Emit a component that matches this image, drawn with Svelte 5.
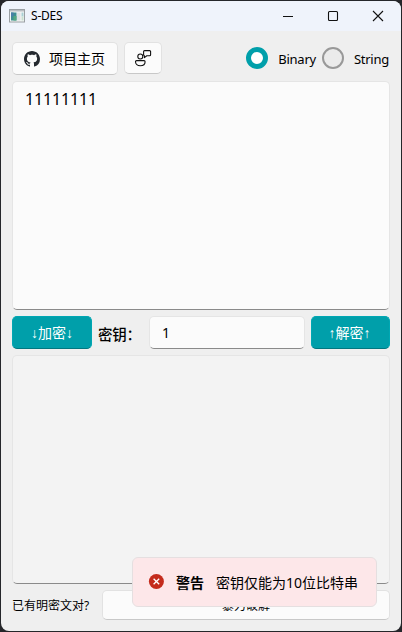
<script>
  let mode = $state('Binary');
  let plain = $state('11111111');
  let cipher = $state('');
  let key = $state('1');
</script>

<div class="desktop">
  <div class="window">
    <header>
      <svg class="app-icon" width="16" height="14" viewBox="0 0 16 14">
        <rect x=".5" y=".5" width="15" height="12.5" fill="#f5f7f7" stroke="#9a9fa3" />
        <rect x="1" y="1" width="14" height="1.5" fill="#b9bdc1" />
        <rect x="2" y="3.5" width="5.5" height="8" fill="#3f8f92" />
        <rect x="2" y="3.5" width="2.5" height="4" fill="#4a7fa8" />
        <rect x="4.5" y="7" width="3" height="4.5" fill="#55a780" />
        <rect x="8" y="3.5" width="3.5" height="8" fill="#dfe2e3" />
        <rect x="12.5" y="3.5" width="2" height="4" fill="#a9cfd4" />
        <rect x="12.5" y="7.5" width="2" height="4" fill="#c9dfcf" />
      </svg>
      <span class="title">S-DES</span>
      <div class="controls">
        <svg width="12" height="12" viewBox="0 0 12 12"><path d="M1 6.5H11" /></svg>
        <svg width="12" height="12" viewBox="0 0 12 12"><rect x="1.5" y="1.5" width="9" height="9" rx="1" /></svg>
        <svg width="12" height="12" viewBox="0 0 12 12"><path d="M1 1L11 11M11 1L1 11" /></svg>
      </div>
    </header>

    <main>
      <div class="row top">
        <button class="home">
          <svg width="16" height="16" viewBox="0 0 16 16" fill="#24292f">
            <path d="M8 0C3.58 0 0 3.58 0 8c0 3.54 2.29 6.53 5.47 7.59.4.07.55-.17.55-.38 0-.19-.01-.82-.01-1.49-2.01.37-2.53-.49-2.69-.94-.09-.23-.48-.94-.82-1.13-.28-.15-.68-.52-.01-.53.63-.01 1.08.58 1.23.82.72 1.21 1.87.87 2.33.66.07-.52.28-.87.51-1.07-1.78-.2-3.64-.89-3.64-3.95 0-.87.31-1.59.82-2.15-.08-.2-.36-1.02.08-2.12 0 0 .67-.21 2.2.82.64-.18 1.32-.27 2-.27s1.36.09 2 .27c1.53-1.04 2.2-.82 2.2-.82.44 1.1.16 1.92.08 2.12.51.56.82 1.27.82 2.15 0 3.07-1.87 3.75-3.65 3.95.29.25.54.73.54 1.48 0 1.07-.01 1.93-.01 2.2 0 .21.15.46.55.38A8.01 8.01 0 0 0 16 8c0-4.42-3.58-8-8-8z" />
          </svg>
          <span>项目主页</span>
        </button>
        <button class="feedback" aria-label="feedback">
          <svg width="18" height="18" viewBox="0 0 18 18" fill="none" stroke="#111" stroke-width="1.1" stroke-linejoin="round">
            <circle cx="6.3" cy="7.5" r="2.5" />
            <path d="M2.6 11.6H10a1.1 1.1 0 0 1 1.1 1.1c0 2.4-1.9 4-4.8 4s-4.8-1.6-4.8-4a1.1 1.1 0 0 1 1.1-1.1z" />
            <path d="M10.6 1.6H15.6a1 1 0 0 1 1 1V5.8a1 1 0 0 1-1 1H12.8L10.4 8.6V6.8a1 1 0 0 1-.8-1V2.6a1 1 0 0 1 1-1z" />
          </svg>
        </button>
        <div class="modes">
          {#each ['Binary', 'String'] as m}
            <label>
              <input type="radio" name="mode" value={m} bind:group={mode} />
              <span>{m}</span>
            </label>
          {/each}
        </div>
      </div>

      <textarea class="plain" bind:value={plain} spellcheck="false"></textarea>

      <div class="row mid">
        <button class="primary enc">↓加密↓</button>
        <span class="key-label">密钥：</span>
        <input class="key" bind:value={key} />
        <button class="primary dec">↑解密↑</button>
      </div>

      <textarea class="cipher" readonly bind:value={cipher}></textarea>

      <div class="row bottom">
        <span class="hint">已有明密文对?</span>
        <button class="crack">暴力破解</button>
      </div>
    </main>

    <div class="toast" role="alert">
      <svg width="16" height="16" viewBox="0 0 16 16">
        <circle cx="8.4" cy="7.5" r="7.5" fill="#c42b1c" />
        <path d="M5.6 4.7L11.2 10.3M11.2 4.7L5.6 10.3" stroke="#fff" stroke-width="1.3" />
      </svg>
      <strong>警告</strong>
      <span>密钥仅能为10位比特串</span>
    </div>
  </div>
</div>

<style>
  :global(body) {
    background: #25262a;
  }
  .desktop,
  .desktop * {
    box-sizing: border-box;
  }
  .desktop {
    width: 402px;
    height: 632px;
    background: #25262a;
    padding: 1px;
    overflow: hidden;
    font-family: 'Noto Sans', 'Noto Sans CJK SC', sans-serif;
    color: #000;
  }
  .window {
    position: relative;
    width: 400px;
    height: 630px;
    border-radius: 8px;
    background: #efefef;
    overflow: hidden;
  }
  header {
    height: 30px;
    background: #eff3fb;
    display: flex;
    align-items: center;
    padding-left: 8px;
  }
  .title {
    font-size: 12px;
    letter-spacing: -0.2px;
    margin-left: 6px;
    line-height: 16px;
  }
  .controls {
    margin-left: auto;
    display: flex;
    gap: 33px;
    padding-right: 17px;
  }
  .controls svg {
    fill: none;
    stroke: #111;
    stroke-width: 1.1;
  }
  main {
    padding: 11px 11px 0;
    display: flex;
    flex-direction: column;
  }
  .row {
    display: flex;
    align-items: center;
  }
  button,
  input,
  textarea {
    font-family: inherit;
    color: #000;
    margin: 0;
    outline: none;
  }
  button {
    display: flex;
    align-items: center;
    justify-content: center;
    padding: 0;
    background: #fbfbfb;
    border: 1px solid #e2e2e2;
    border-bottom-color: #c8c8c8;
    border-radius: 5px;
    font-size: 14px;
  }
  .top {
    height: 33px;
    align-items: flex-start;
  }
  .home {
    width: 106px;
    height: 33px;
    gap: 9px;
    padding-right: 1px;
  }
  .home span {
    line-height: 20px;
  }
  .feedback {
    width: 38px;
    height: 32px;
    margin-left: 6px;
  }
  .modes {
    display: flex;
    margin-left: auto;
    gap: 6px;
    height: 32px;
    padding-right: 1px;
  }
  label {
    display: flex;
    align-items: center;
    gap: 10px;
    font-size: 13px;
    letter-spacing: -0.25px;
  }
  label span {
    padding-top: 2px;
  }
  input[type='radio'] {
    appearance: none;
    width: 22px;
    height: 22px;
    border-radius: 50%;
    border: 2px solid #999;
    background: #ebebeb;
  }
  input[type='radio']:checked {
    border: 5px solid #009faa;
    background: #fff;
  }
  textarea {
    display: block;
    width: 378px;
    height: 229px;
    margin: 6px 0;
    padding: 6px 12px;
    resize: none;
    border: 1px solid #e5e5e5;
    border-bottom-color: #8a8a8a;
    border-radius: 5px;
    background: #fbfbfb;
    font-size: 16px;
    line-height: 22px;
    letter-spacing: -0.15px;
  }
  .cipher {
    background: #f3f3f3;
  }
  .mid {
    height: 33px;
  }
  .primary {
    height: 33px;
    background: #009faa;
    border-color: #00a7b3;
    border-bottom-color: #007780;
    color: #fff;
    font-family: 'Liberation Sans', 'Noto Sans CJK SC', sans-serif;
    padding-bottom: 1px;
  }
  .enc {
    width: 80px;
  }
  .dec {
    width: 79px;
    padding-right: 2px;
  }
  .key-label {
    width: 51px;
    margin-left: 6px;
    padding-top: 1px;
    font-size: 14.5px;
    font-weight: 500;
    letter-spacing: -0.3px;
    white-space: nowrap;
  }
  .key {
    width: 156px;
    height: 33px;
    margin-right: 6px;
    padding: 0 12px;
    border: 1px solid #e5e5e5;
    border-bottom-color: #8a8a8a;
    border-radius: 5px;
    background: #fbfbfb;
    font-size: 14px;
  }
  .bottom {
    height: 30px;
  }
  .hint {
    width: 90px;
    font-size: 12px;
    white-space: nowrap;
  }
  .crack {
    width: 288px;
    height: 30px;
    font-size: 12px;
  }
  .toast {
    position: absolute;
    left: 131px;
    top: 556px;
    width: 245px;
    height: 50px;
    display: flex;
    align-items: center;
    padding-left: 15px;
    background: #fde7e9;
    border: 1px solid #e5dfe0;
    border-radius: 6px;
    font-size: 14px;
    white-space: nowrap;
  }
  .toast strong {
    margin: 0 12px;
  }
</style>
